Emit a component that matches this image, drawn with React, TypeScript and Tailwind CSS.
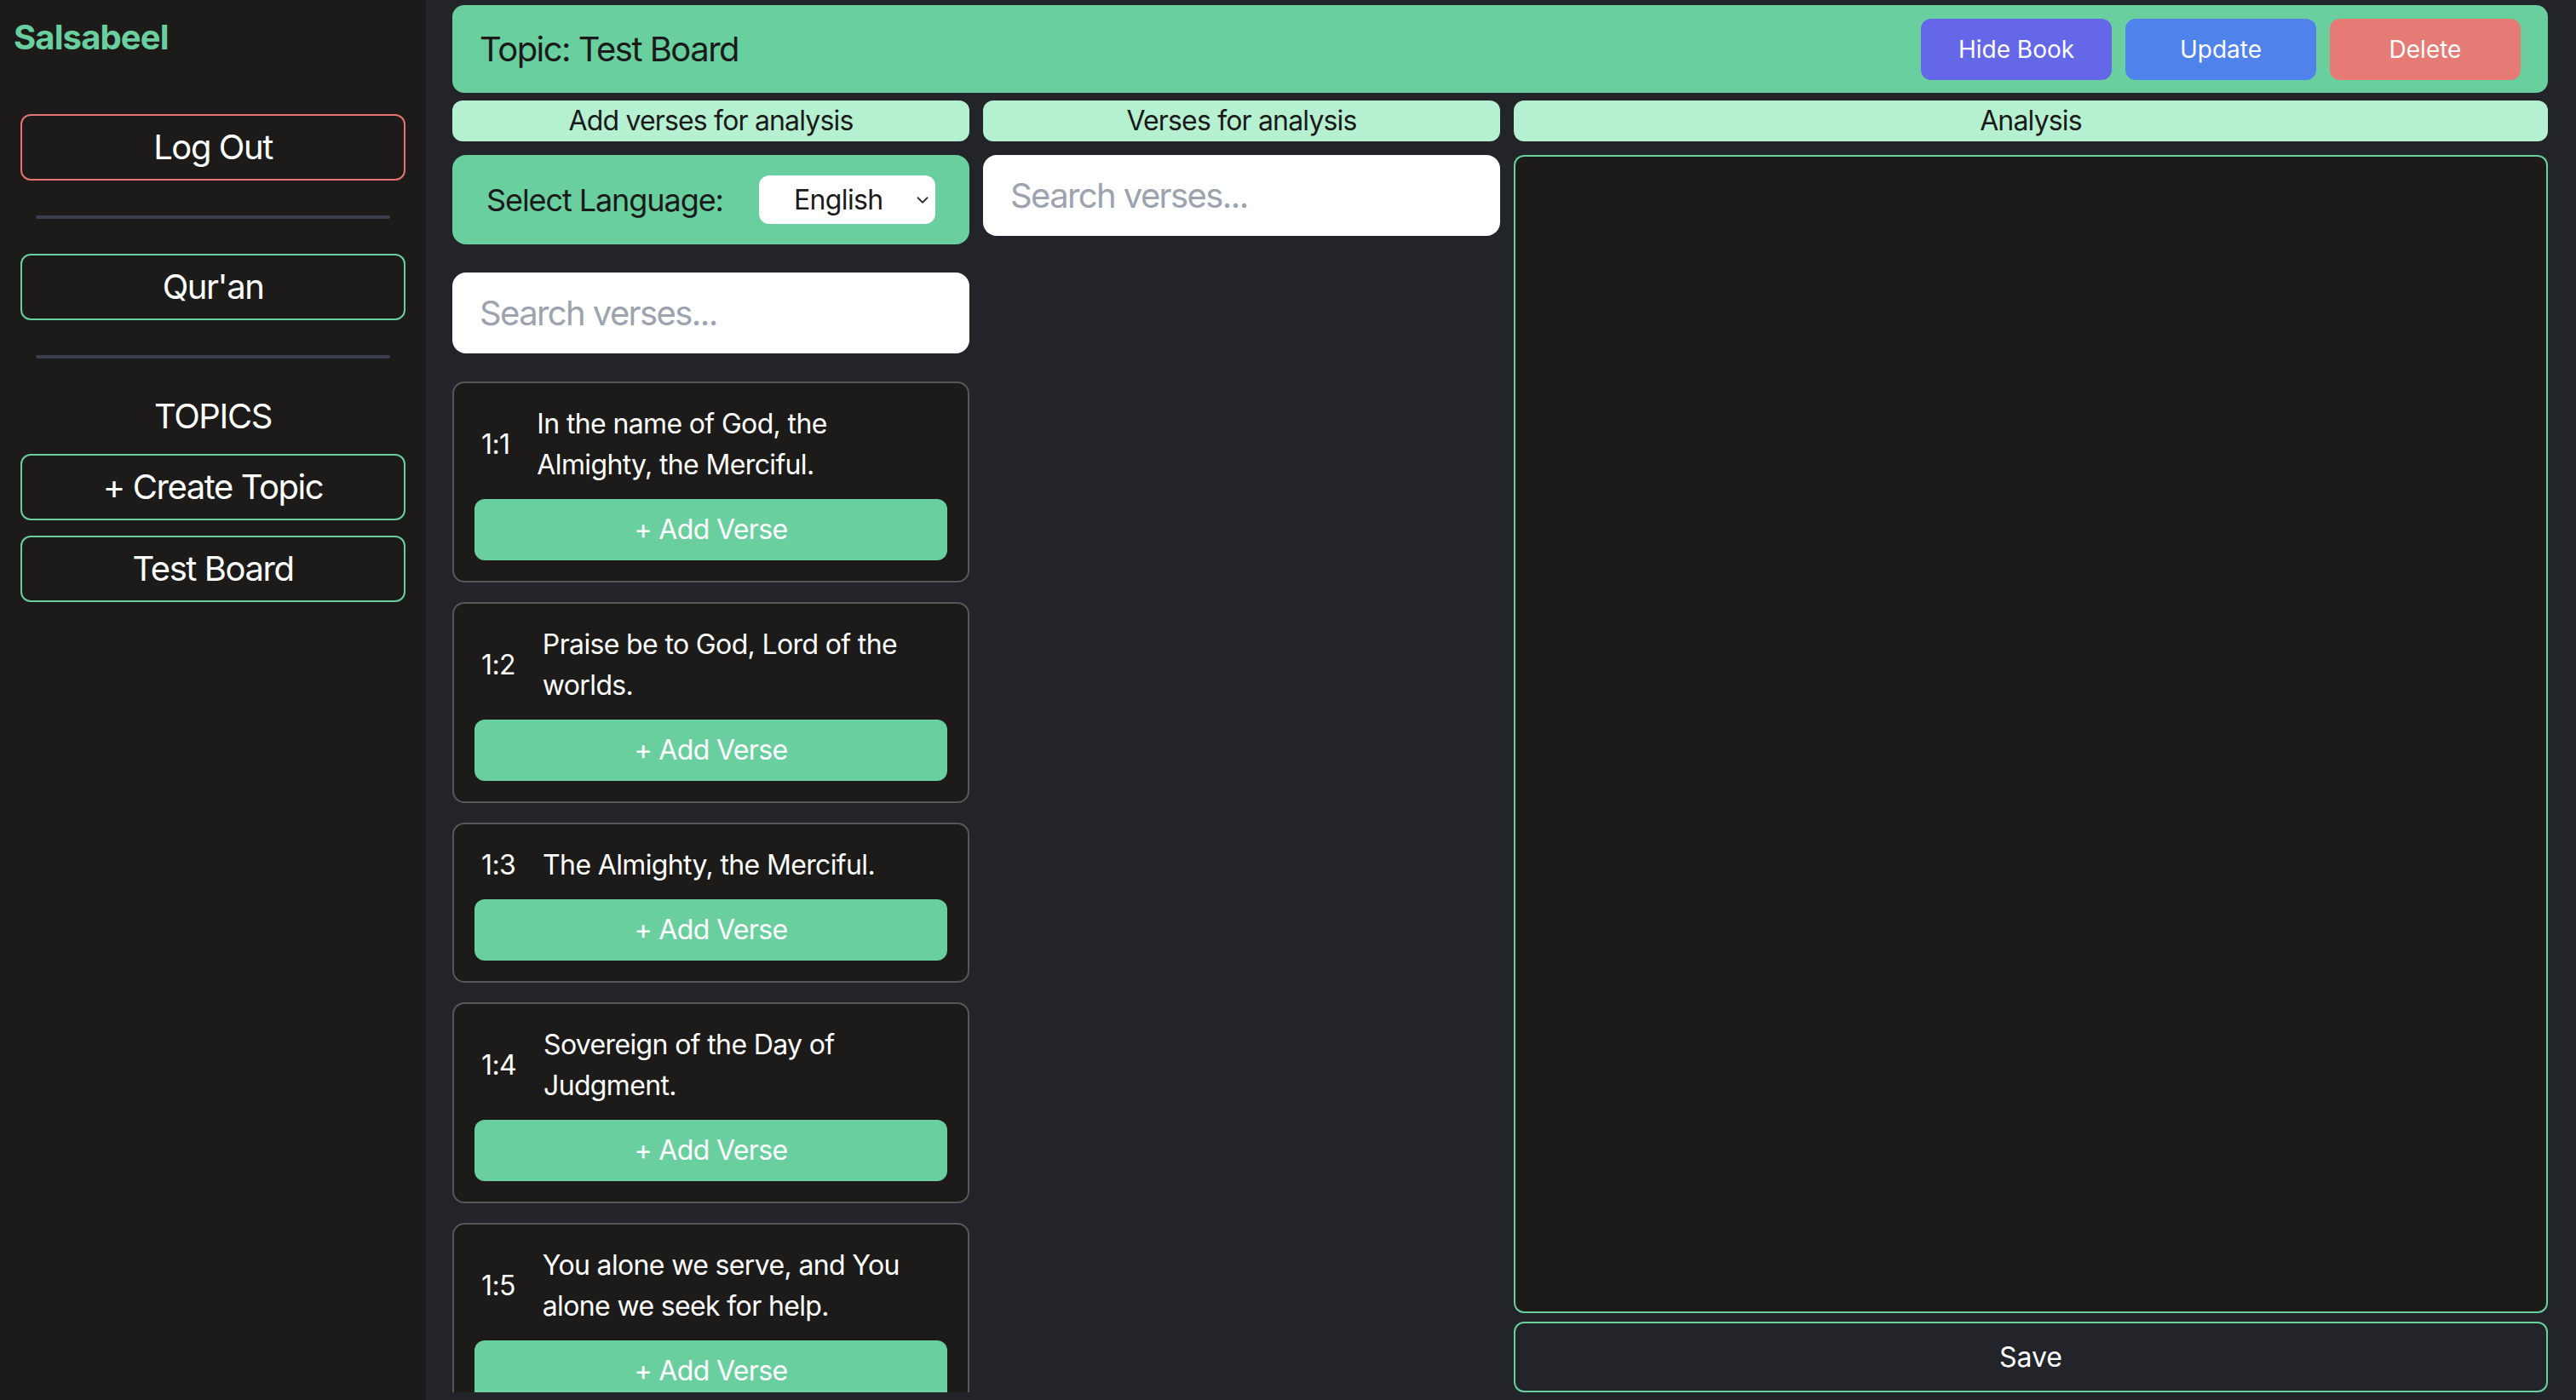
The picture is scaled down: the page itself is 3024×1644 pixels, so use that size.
import { ChevronDown } from 'lucide-react'

const verses = [
  { id: '1:1', text: 'In the name of God, the Almighty, the Merciful.' },
  { id: '1:2', text: 'Praise be to God, Lord of the worlds.' },
  { id: '1:3', text: 'The Almighty, the Merciful.' },
  { id: '1:4', text: 'Sovereign of the Day of Judgment.' },
  { id: '1:5', text: 'You alone we serve, and You alone we seek for help.' },
]

function SideButton({ label, tone = 'green' }: { label: string; tone?: 'green' | 'red' }) {
  return (
    <button
      className={`flex h-[78px] w-full items-center justify-center rounded-[12px] border-2 text-[40px] tracking-[-0.036em] text-white ${
        tone === 'red' ? 'border-[#e57373]' : 'border-[#6acf9f]'
      }`}
    >
      {label}
    </button>
  )
}

function Divider() {
  return <div className="mx-[18px] h-[4px] rounded-full bg-[#3a3f4e]" />
}

function Sidebar() {
  return (
    <aside className="flex w-[500px] shrink-0 flex-col bg-[#1c1b1a] px-[24px]">
      <div className="-ml-[8px] pt-[16px] text-[40px] font-bold leading-[56px] tracking-[-0.022em] text-[#6acf9f]">
        Salsabeel
      </div>
      <div className="mt-[62px]">
        <SideButton label="Log Out" tone="red" />
      </div>
      <div className="my-[41px]">
        <Divider />
      </div>
      <SideButton label="Qur'an" />
      <div className="my-[41px]">
        <Divider />
      </div>
      <div className="-mt-[1px] text-center text-[40px] leading-[56px] tracking-[-0.034em] text-white">TOPICS</div>
      <div className="mt-[16px] flex flex-col gap-[18px]">
        <SideButton label="+ Create Topic" />
        <SideButton label="Test Board" />
      </div>
    </aside>
  )
}

function ColumnHeader({ title }: { title: string }) {
  return (
    <div className="flex items-center justify-center rounded-[12px] bg-[#b5f1d1] text-[32px] tracking-[-0.026em] text-[#1a1a1a]">
      {title}
    </div>
  )
}

function SearchBox() {
  return (
    <input
      placeholder="Search verses..."
      className="h-[95px] w-full shrink-0 rounded-[16px] bg-white px-[32px] text-[40px] tracking-[-0.04em] text-[#1a1a1a] outline-none placeholder:text-[#9ca3af]"
    />
  )
}

function VerseCard({ id, text }: { id: string; text: string }) {
  return (
    <div className="shrink-0 rounded-[14px] border-2 border-[#575757] bg-[#1c1b1a] p-[24px]">
      <div className="flex items-center gap-[32px] px-[8px] text-[32px] leading-[48px] tracking-[-0.02em] text-white">
        <span className="shrink-0">{id}</span>
        <span>{text}</span>
      </div>
      <button className="mt-[16px] flex h-[72px] w-full items-center justify-center rounded-[12px] bg-[#6acf9f] text-[32px] tracking-[-0.02em] text-white">
        + Add Verse
      </button>
    </div>
  )
}

export default function App() {
  return (
    <div className="flex h-[1644px] w-full overflow-hidden font-['Inter','Noto_Sans',sans-serif]">
      <Sidebar />
      <main className="flex min-w-0 flex-1 flex-col bg-[#222429] pb-[9px] pl-[31px] pr-[33px] pt-[6px]">
        <header className="flex h-[103px] shrink-0 items-center justify-between rounded-[14px] bg-[#6acf9f] pl-[32px] pr-[32px]">
          <h1 className="text-[40px] tracking-[-0.038em] text-[#1a1a1a]">Topic: Test Board</h1>
          <div className="flex gap-[16px]">
            <button className="h-[72px] w-[224px] rounded-[12px] bg-[#6467e8] text-[28px] text-white">Hide Book</button>
            <button className="h-[72px] w-[224px] rounded-[12px] bg-[#4f82eb] text-[28px] text-white">Update</button>
            <button className="h-[72px] w-[224px] rounded-[12px] bg-[#e67b75] text-[28px] text-white">Delete</button>
          </div>
        </header>

        <div className="mt-[9px] grid min-h-0 flex-1 grid-cols-[1fr_1fr_2fr] grid-rows-[48px_minmax(0,1fr)] gap-x-[16px] gap-y-[16px]">
          <ColumnHeader title="Add verses for analysis" />
          <ColumnHeader title="Verses for analysis" />
          <ColumnHeader title="Analysis" />

          <div className="flex min-h-0 flex-col overflow-hidden">
            <div className="flex h-[105px] shrink-0 items-center justify-between rounded-[16px] bg-[#6acf9f] px-[40px]">
              <span className="text-[36px] tracking-[-0.03em] text-[#1a1a1a]">Select Language:</span>
              <div className="relative">
                <select className="h-[57px] w-[207px] appearance-none rounded-[12px] bg-white pl-[41px] text-[32px] tracking-[-0.02em] text-[#1a1a1a] outline-none">
                  <option>English</option>
                </select>
                <ChevronDown
                  className="pointer-events-none absolute right-[4px] top-1/2 h-[22px] w-[22px] -translate-y-1/2 text-[#333]"
                  strokeWidth={2}
                />
              </div>
            </div>
            <div className="mt-[33px]">
              <SearchBox />
            </div>
            <div className="mt-[33px] flex flex-col gap-[23px]">
              {verses.map(v => (
                <VerseCard key={v.id} id={v.id} text={v.text} />
              ))}
            </div>
          </div>

          <div className="flex min-h-0 flex-col">
            <SearchBox />
          </div>

          <div className="flex min-h-0 flex-col">
            <textarea className="min-h-0 flex-1 resize-none rounded-[12px] border-2 border-[#6acf9f] bg-[#1c1b1a] p-[16px] text-[32px] text-white outline-none" />
            <button className="mt-[10px] h-[83px] shrink-0 rounded-[12px] border-2 border-[#6acf9f] bg-[#222429] text-[32px] text-white">
              Save
            </button>
          </div>
        </div>
      </main>
    </div>
  )
}
